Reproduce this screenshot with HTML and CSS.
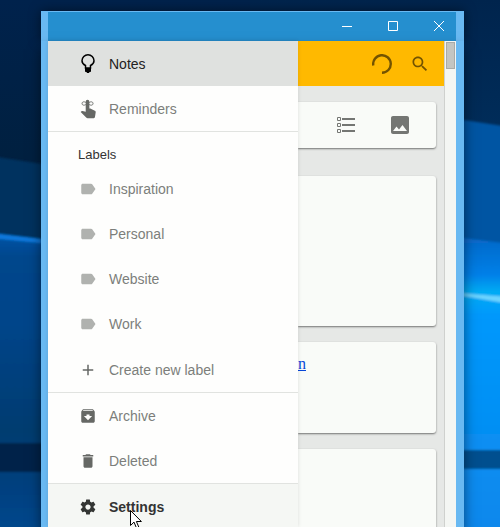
FILE: index.html
```html
<!DOCTYPE html>
<html lang="en">
<head>
<meta charset="utf-8">
<title>Notes</title>
<link rel="stylesheet" href="styles.css">
</head>
<body>
<svg class="wallpaper" viewBox="0 0 500 527" preserveAspectRatio="none" aria-hidden="true">
  <defs>
    <linearGradient id="night" x1="0" y1="0" x2="0" y2="1">
      <stop offset="0" stop-color="#00224c"/>
      <stop offset=".3" stop-color="#002040"/>
      <stop offset="1" stop-color="#00305f"/>
    </linearGradient>
    <linearGradient id="left-low" x1="0" y1="0" x2="0" y2="1">
      <stop offset="0" stop-color="#0556a8"/>
      <stop offset=".08" stop-color="#00468c"/>
      <stop offset=".3" stop-color="#00458a"/>
      <stop offset=".65" stop-color="#003c70"/>
      <stop offset=".8" stop-color="#003f7c"/>
      <stop offset="1" stop-color="#00488f"/>
    </linearGradient>
    <linearGradient id="right-top" x1="0" y1="0" x2="0" y2="1">
      <stop offset="0" stop-color="#00244d"/>
      <stop offset=".5" stop-color="#003566"/>
      <stop offset="1" stop-color="#00427d"/>
    </linearGradient>
    <linearGradient id="right-low" gradientUnits="userSpaceOnUse" x1="0" y1="237" x2="0" y2="527">
      <stop offset="0" stop-color="#0868c8"/>
      <stop offset=".13" stop-color="#0080e8"/>
      <stop offset=".19" stop-color="#00acf4"/>
      <stop offset=".27" stop-color="#0098fc"/>
      <stop offset="1" stop-color="#0c88ec"/>
    </linearGradient>
    <filter id="soft" x="-5%" y="-20%" width="110%" height="140%">
      <feGaussianBlur stdDeviation="1"/>
    </filter>
  </defs>
  <rect width="250" height="527" fill="url(#night)"/>
  <rect x="250" width="250" height="527" fill="url(#right-top)"/>
  <g filter="url(#soft)">
    <path d="M-10 156l260 40v60L-10 238z" fill="#00335f"/>
    <path d="M-10 233l260 32v272H-10z" fill="url(#left-low)"/>
    <path d="M-10 233l51 6v4l-51-5z" fill="#0c78dc"/>
    <rect x="-10" y="443" width="260" height="29" fill="#00204a"/>
    <path d="M250 85l214 35 46 7v130H250z" fill="#0055a3"/>
    <path d="M250 205l214 33 46 6v293H250z" fill="url(#right-low)"/>
    <path d="M458 293l52 4v7l-52-9z" fill="#6cd4ff"/>
    <rect x="250" y="450" width="260" height="19" fill="#00508f"/>
  </g>
</svg>

<div class="window">
  <div class="title-bar">
    <button aria-label="Minimize"><svg width="10" height="10" viewBox="0 0 10 10"><path d="M0 5.5h10"/></svg></button>
    <button aria-label="Maximize"><svg width="10" height="10" viewBox="0 0 10 10"><path d="M.5.5h9v9h-9z"/></svg></button>
    <button aria-label="Close"><svg width="10" height="10" viewBox="0 0 10 10"><path d="M0 0l10 10M10 0L0 10"/></svg></button>
  </div>

  <div class="app">
    <nav class="drawer">
      <a class="item active" href="#notes">
        <span class="icon"><svg width="22" height="22" viewBox="0 0 22 22"><path d="M8.500 15v-2.500C6.500 11.500 5 9.800 5 7.700a6 6 0 0 1 12 0c0 2.100-1.500 3.800-3.500 4.800V15z" fill="none" stroke="currentColor" stroke-width="1.500"/><path d="M8 15h6v3c0 .6-.5 1-1 1h-.5l-.5 1h-2l-.5-1H9c-.5 0-1-.4-1-1z"/></svg></span>
        Notes
      </a>
      <a class="item" href="#reminders">
        <span class="icon"><svg width="22" height="22" viewBox="0 0 24 24"><path d="M9.500 4a2 2 0 0 1 4 0v7.500h1l5 2.300c.8.400 1 1 .9 1.700l-.8 5.200c-.1.800-.7 1.300-1.400 1.300h-6.700c-.5 0-.9-.2-1.200-.5L4 15.400l.9-.9c.3-.3.700-.4 1.100-.3l3.500.8z"/><path d="M11 6C8.500 3.300 5.500 3.800 5.500 6s3 2.700 5.500 0zm1 0c2.500-2.700 5.500-2.200 5.500 0s-3 2.700-5.500 0z" fill="none" stroke="currentColor"/></svg></span>
        Reminders
      </a>

      <div class="group labels">
        <h2>Labels</h2>
        <a class="item label" href="#inspiration">
          <span class="icon"><svg width="18" height="18" viewBox="0 0 24 24"><path d="M17.600 5.800C17.300 5.300 16.700 5 16 5H5c-1.100 0-2 .9-2 2v10c0 1.100.9 2 2 2h11c.7 0 1.300-.3 1.600-.8L22 12z"/></svg></span>
          Inspiration
        </a>
        <a class="item label" href="#personal">
          <span class="icon"><svg width="18" height="18" viewBox="0 0 24 24"><path d="M17.600 5.800C17.300 5.300 16.700 5 16 5H5c-1.100 0-2 .9-2 2v10c0 1.100.9 2 2 2h11c.7 0 1.300-.3 1.600-.8L22 12z"/></svg></span>
          Personal
        </a>
        <a class="item label" href="#website">
          <span class="icon"><svg width="18" height="18" viewBox="0 0 24 24"><path d="M17.600 5.800C17.300 5.300 16.700 5 16 5H5c-1.100 0-2 .9-2 2v10c0 1.100.9 2 2 2h11c.7 0 1.300-.3 1.600-.8L22 12z"/></svg></span>
          Website
        </a>
        <a class="item label" href="#work">
          <span class="icon"><svg width="18" height="18" viewBox="0 0 24 24"><path d="M17.600 5.800C17.300 5.300 16.700 5 16 5H5c-1.100 0-2 .9-2 2v10c0 1.100.9 2 2 2h11c.7 0 1.300-.3 1.600-.8L22 12z"/></svg></span>
          Work
        </a>
        <a class="item create" href="#new-label">
          <span class="icon"><svg width="18" height="18" viewBox="0 0 24 24"><path d="M19 13h-6v6h-2v-6H5v-2h6V5h2v6h6z"/></svg></span>
          Create new label
        </a>
      </div>

      <div class="group">
        <a class="item" href="#archive">
          <span class="icon"><svg width="18" height="18" viewBox="0 0 24 24"><path d="M20.500 5.200l-1.400-1.700C18.900 3.200 18.500 3 18 3H6c-.5 0-.9.200-1.200.6L3.500 5.200C3.200 5.600 3 6 3 6.500V19c0 1.100.9 2 2 2h14c1.100 0 2-.9 2-2V6.500c0-.5-.2-.9-.5-1.300zM12 17.500L6.500 12H10v-2h4v2h3.500L12 17.500zM5.100 5l.8-1h12l.9 1H5.100z"/></svg></span>
          Archive
        </a>
        <a class="item" href="#deleted">
          <span class="icon"><svg width="18" height="18" viewBox="0 0 24 24"><path d="M6 19c0 1.100.9 2 2 2h8c1.100 0 2-.9 2-2V7H6v12zM19 4h-3.500l-1-1h-5l-1 1H5v2h14V4z"/></svg></span>
          Deleted
        </a>
      </div>

      <div class="group">
        <a class="item hovered" href="#settings">
          <span class="icon"><svg width="18" height="18" viewBox="0 0 24 24"><path d="M19.430 12.980c.04-.32.07-.64.07-.98s-.03-.66-.07-.98l2.110-1.650c.19-.15.24-.42.12-.64l-2-3.460c-.12-.22-.39-.3-.61-.22l-2.490 1c-.52-.4-1.080-.73-1.690-.98l-.38-2.650C14.460 2.180 14.250 2 14 2h-4c-.25 0-.46.18-.49.42l-.38 2.650c-.61.25-1.170.59-1.690.98l-2.490-1c-.23-.09-.49 0-.61.22l-2 3.460c-.13.22-.07.49.12.64l2.110 1.650c-.04.32-.07.65-.07.98s.03.66.07.98l-2.110 1.650c-.19.15-.24.42-.12.64l2 3.460c.12.22.39.3.61.22l2.490-1c.52.4 1.080.73 1.690.98l.38 2.650c.03.24.24.42.49.42h4c.25 0 .46-.18.49-.42l.38-2.650c.61-.25 1.170-.59 1.690-.98l2.490 1c.23.09.49 0 .61-.22l2-3.460c.12-.22.07-.49-.12-.64l-2.110-1.650zM12 15.500c-1.930 0-3.500-1.570-3.500-3.500s1.570-3.500 3.500-3.500 3.500 1.570 3.500 3.500-1.570 3.500-3.500 3.500z"/></svg></span>
          Settings
          <svg class="cursor" width="13" height="20" viewBox="0 0 13 20" aria-hidden="true"><path d="M.5.5v15l3.500-3.400 2.500 6 2.300-1-2.400-5.600h5z"/></svg>
        </a>
      </div>
    </nav>

    <main class="content">
      <header class="toolbar">
        <button aria-label="Syncing"><svg width="20" height="20" viewBox="0 0 20 20"><path d="M1.300 11.500A8.800 8.800 0 1 1 10 18.800" fill="none" stroke="currentColor" stroke-width="2.400"/></svg></button>
        <button aria-label="Search"><svg width="20" height="20" viewBox="0 0 24 24"><path d="M15.500 14h-.8l-.3-.3c1-1.100 1.600-2.600 1.600-4.200C16 5.900 13.100 3 9.500 3S3 5.900 3 9.500 5.900 16 9.500 16c1.600 0 3.100-.6 4.200-1.600l.3.300v.8l5 5 1.500-1.500-5-5zm-6 0C7 14 5 12 5 9.500S7 5 9.500 5 14 7 14 9.500 12 14 9.500 14z"/></svg></button>
      </header>
      <div class="notes">
        <section class="card composer">
          <button aria-label="New list"><svg width="24" height="24" viewBox="0 0 24 24"><path d="M8 5h13v2H8zM8 11h13v2H8zM8 17h13v2H8z"/><path d="M3.500 4.500h3v3h-3zM3.500 10.500h3v3h-3zM3.500 16.500h3v3h-3z" fill="none" stroke="currentColor"/></svg></button>
          <button aria-label="New note with image"><svg width="24" height="24" viewBox="0 0 24 24"><path d="M21 19V5c0-1.100-.9-2-2-2H5c-1.100 0-2 .9-2 2v14c0 1.100.9 2 2 2h14c1.100 0 2-.9 2-2zM8.500 13.500l2.500 3 3.500-4.500 4.500 6H5l3.500-4.500z"/></svg></button>
        </section>
        <article class="card tall"></article>
        <article class="card short"><a href="#link">n</a></article>
        <article class="card tall"></article>
      </div>
    </main>

    <div class="scrollbar"><div class="thumb"></div></div>
  </div>
</div>
</body>
</html>
```
FILE: styles.css
```css
* {
  box-sizing: border-box;
}
body {
  margin: 0;
  height: 100vh;
  overflow: hidden;
  background: #00204a;
  font-family: Arial, "Liberation Sans", sans-serif;
  font-size: 14px;
}
svg {
  display: block;
  fill: currentColor;
}
button {
  display: flex;
  align-items: center;
  justify-content: center;
  border: none;
  padding: 0;
  background: none;
  color: inherit;
  cursor: pointer;
}

.wallpaper {
  position: absolute;
  inset: 0;
  width: 100%;
  height: 100%;
  z-index: -1;
}

/* window frame */
.window {
  display: flex;
  flex-direction: column;
  height: 100%;
  margin: 0 36px 0 41px;
  padding-top: 11px;
}
.title-bar {
  display: flex;
  justify-content: flex-end;
  gap: 12px;
  height: 30px;
  flex-shrink: 0;
  padding-bottom: 1px;
  border: solid #69b9f2;
  border-width: 1px 8px 0 7px;
  background: #258fcf;
  color: #fff;
  box-shadow: 0 0 12px rgba(0, 0, 0, 0.5);
}
.title-bar button {
  width: 34px;
}
.title-bar svg {
  fill: none;
  stroke: currentColor;
  overflow: visible;
}
.app {
  display: flex;
  flex: 1;
  min-height: 0;
  border: solid #69b9f2;
  border-width: 0 8px 0 7px;
  background: #e6e8e6;
  box-shadow: 0 8px 12px rgba(0, 0, 0, 0.5);
}

/* drawer */
.drawer {
  width: 250px;
  flex-shrink: 0;
  background: #fefefd;
  box-shadow: 0 0 4px rgba(0, 0, 0, 0.12);
  z-index: 1;
}
.item {
  position: relative;
  display: flex;
  align-items: center;
  gap: 10px;
  height: 45px;
  padding-left: 29px;
  color: #7c7e7b;
  text-decoration: none;
}
.icon {
  display: flex;
  align-items: center;
  justify-content: center;
  width: 22px;
  color: #666865;
}
.label .icon {
  color: #b0b2af;
}
.active {
  background: #dfe1df;
  color: #222;
}
.active .icon {
  color: #000;
}
.hovered {
  background: #f5f7f4;
  color: #333;
  font-weight: bold;
}
.hovered .icon {
  color: #333533;
}
.group {
  border-top: 1px solid #e1e3e0;
}
.group h2 {
  margin: 0;
  padding: 15px 30px 3px;
  font-size: 13px;
  line-height: 16px;
  font-weight: normal;
  color: #333;
}
.create {
  margin-top: 1px;
}
.cursor {
  position: absolute;
  left: 82px;
  top: 26px;
  fill: #fff;
  stroke: #000;
}

/* notes */
.content {
  flex: 1;
  min-width: 0;
  overflow: hidden;
}
.toolbar {
  display: flex;
  align-items: center;
  justify-content: flex-end;
  gap: 18px;
  height: 45px;
  padding-right: 14px;
  background: #ffb900;
  color: #735300;
}
.notes {
  display: flex;
  flex-direction: column;
  padding: 16px 8px 0 0;
}
.card {
  margin-bottom: 16px;
  background: #f9fbf8;
  border-radius: 0 3px 3px 0;
  box-shadow: 0 1px 2px rgba(0, 0, 0, 0.5);
}
.composer {
  display: flex;
  align-items: center;
  justify-content: flex-end;
  gap: 30px;
  height: 46px;
  margin-bottom: 28px;
  padding-right: 24px;
  color: #747673;
}
.tall {
  height: 150px;
}
.short {
  height: 91px;
  padding-top: 12px;
  font-family: "Liberation Serif", serif;
  font-size: 16px;
  line-height: 20px;
}
.short a {
  color: #0645d8;
}

.scrollbar {
  width: 12px;
  padding: 1px 1px 0;
  border-left: 1px solid #cfd1ce;
  background: #f4f6f3;
}
.thumb {
  height: 27px;
  border: 1px solid #a9aba8;
  background: #c3c5c2;
}
```
